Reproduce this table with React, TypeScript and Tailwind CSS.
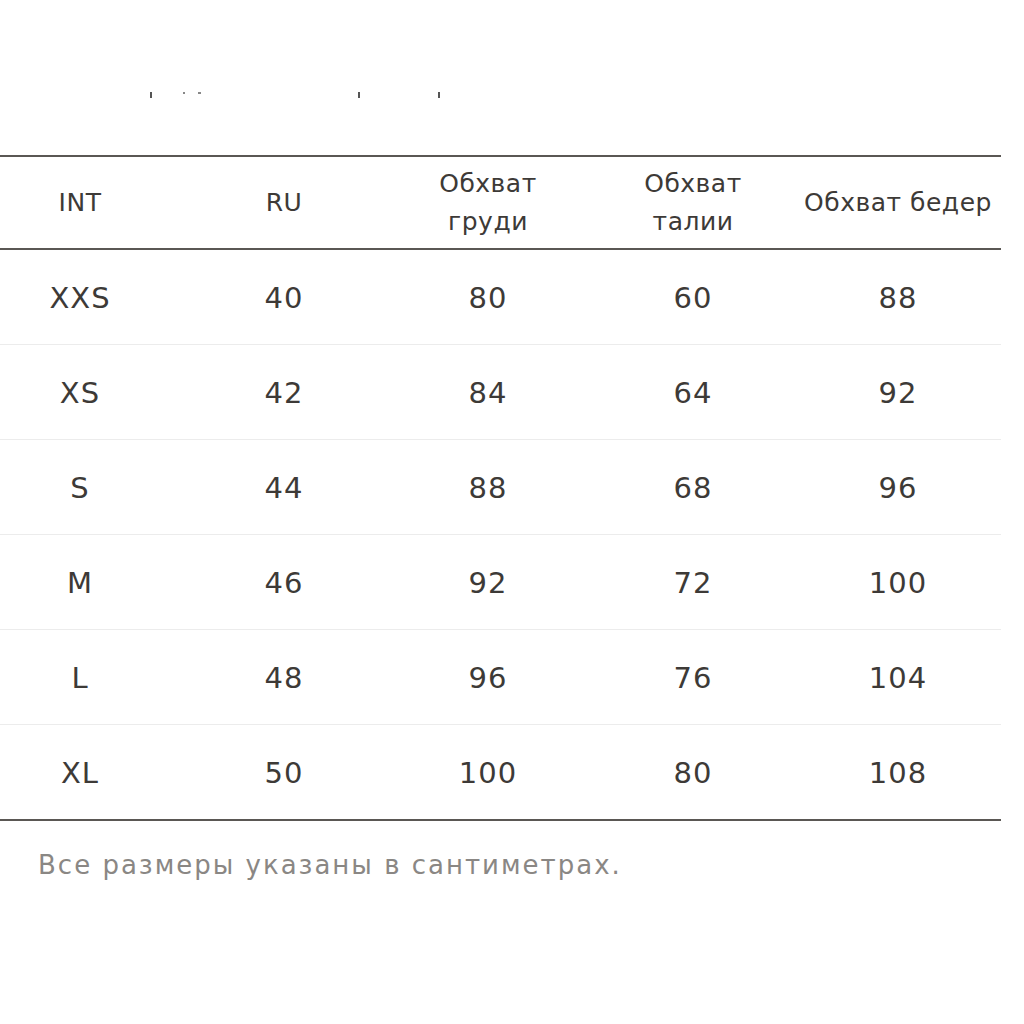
const headers: string[][] = [
  ["INT"],
  ["RU"],
  ["Обхват", "груди"],
  ["Обхват", "талии"],
  ["Обхват бедер"],
];

const rows: string[][] = [
  ["XXS", "40", "80", "60", "88"],
  ["XS", "42", "84", "64", "92"],
  ["S", "44", "88", "68", "96"],
  ["M", "46", "92", "72", "100"],
  ["L", "48", "96", "76", "104"],
  ["XL", "50", "100", "80", "108"],
];

const cols = "grid grid-cols-[160px_248px_160px_250px_160px]";

export default function App() {
  return (
    <div className="min-h-[1024px] w-[1024px] bg-white text-[#3d3a37] [font-family:'DejaVu_Sans',sans-serif]">
      {/* clipped line of text above the table */}
      <div className="flex h-[155px] items-start pt-[92px]">
        <span className="ml-[150px] h-[6px] w-[2px] bg-[#555]" />
        <span className="ml-[31px] h-[2px] w-[2px] bg-[#888]" />
        <span className="ml-[13px] h-[2px] w-[3px] bg-[#888]" />
        <span className="ml-[157px] h-[6px] w-[2px] bg-[#555]" />
        <span className="ml-[78px] h-[6px] w-[2px] bg-[#555]" />
      </div>

      <div className="w-[1001px]">
        <div className="h-[2px] bg-[#5a5754]" />
        <div className={`${cols} h-[91px] items-center`}>
          {headers.map((h, i) => (
            <div
              key={i}
              className="flex flex-col items-center text-[25px] leading-[38px] tracking-[0.5px] whitespace-nowrap"
            >
              {h.map((line) => (
                <span key={line}>{line}</span>
              ))}
            </div>
          ))}
        </div>
        <div className="h-[2px] bg-[#5a5754]" />

        {rows.map((r, i) => (
          <div key={r[0]}>
            <div className={`${cols} h-[94px] items-center pt-[3px]`}>
              {r.map((v, j) => (
                <div key={j} className="text-center text-[29px] tracking-[1px]">
                  {v}
                </div>
              ))}
            </div>
            {i < rows.length - 1 ? (
              <div className="h-px bg-[#ececec]" />
            ) : (
              <div className="h-[2px] bg-[#5a5754]" />
            )}
          </div>
        ))}
      </div>

      <p className="pl-[38px] pt-[25px] text-[26px] tracking-[2px] text-[#8a8784]">
        Все размеры указаны в сантиметрах.
      </p>
    </div>
  );
}
